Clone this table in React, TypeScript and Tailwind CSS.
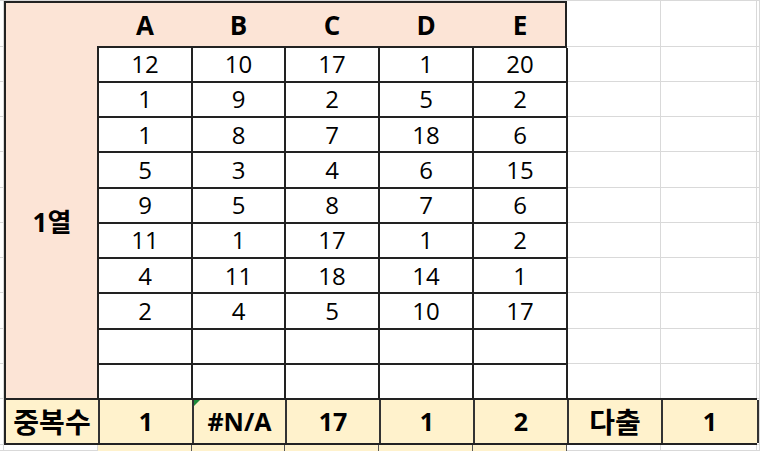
const cols = ['A', 'B', 'C', 'D', 'E'];

const rows: (number | null)[][] = [
  [12, 10, 17, 1, 20],
  [1, 9, 2, 5, 2],
  [1, 8, 7, 18, 6],
  [5, 3, 4, 6, 15],
  [9, 5, 8, 7, 6],
  [11, 1, 17, 1, 2],
  [4, 11, 18, 14, 1],
  [2, 4, 5, 10, 17],
  [null, null, null, null, null],
  [null, null, null, null, null],
];

const totals = ['1', '#N/A', '17', '1', '2'];

const font = "font-['Open_Sans','Noto_Sans_CJK_KR',sans-serif]";

// sheet tracks, shared by the gridline layer and the table layer
const tracks =
  'grid grid-cols-[4px_94px_94px_93px_94px_94px_94px_94px_96px_1fr] grid-rows-[1px_45.5px_repeat(10,35.25px)_46px_1fr]';

function Gridlines() {
  return (
    <div className={`col-start-1 row-start-1 ${tracks}`}>
      {Array.from({ length: 140 }).map((_, i) => (
        <div key={i} className="border-r border-b border-[#d9d9d9]" />
      ))}
    </div>
  );
}

export default function App() {
  return (
    <div className={`grid w-[760px] h-[451px] overflow-hidden bg-white text-black ${font}`}>
      <Gridlines />

      <div className={`col-start-1 row-start-1 ${tracks}`}>
        {/* header band */}
        <div className="col-start-2 col-span-6 row-start-2 bg-[#fce4d6] border-t-2 border-l-2 border-r-2 border-[#222]" />
        {cols.map((c, i) => (
          <div
            key={c}
            className={`row-start-2 flex items-center justify-center pt-1 text-[26px] font-bold ${
              ['col-start-3', 'col-start-4', 'col-start-5', 'col-start-6', 'col-start-7'][i]
            }`}
          >
            {c}
          </div>
        ))}

        {/* row label */}
        <div className="col-start-2 row-start-3 row-span-10 bg-[#fce4d6] border-l-2 border-[#222] flex items-center justify-center text-[26px] font-bold">
          1열
        </div>

        {/* values */}
        <div className="col-start-3 col-span-5 row-start-3 row-span-10 grid grid-cols-[94px_93px_94px_94px_94px] grid-rows-[repeat(10,35.25px)] border-l-2 border-t-2 border-[#222] -ml-[1px] -mt-[1px]">
          {rows.flatMap((r, ri) =>
            r.map((v, ci) => (
              <div
                key={`${ri}-${ci}`}
                className="bg-white border-r-2 border-b-2 border-[#222] flex items-center justify-center text-[24px]"
              >
                {v ?? ''}
              </div>
            ))
          )}
        </div>

        {/* totals row */}
        <div className="col-start-2 col-span-8 row-start-13 grid grid-cols-[94px_94px_93px_94px_94px_94px_94px_96px] bg-[#fff2cc] border-t-2 border-b-2 border-l-2 border-[#222] -mt-[1px]">
          <div className="border-r-2 border-[#333] flex items-center justify-center text-[28px] font-bold">중복수</div>
          {totals.map((t, i) => (
            <div key={i} className="relative border-r-2 border-[#333] flex items-center justify-center text-[25px] font-bold">
              {t === '#N/A' && (
                <span className="absolute top-0 left-0 w-0 h-0 border-t-[6px] border-t-[#1d8a3a] border-r-[6px] border-r-transparent" />
              )}
              {t}
            </div>
          ))}
          <div className="border-r-2 border-[#333] flex items-center justify-center text-[28px] font-bold">다출</div>
          <div className="border-r-2 border-[#333] flex items-center justify-center text-[25px] font-bold">1</div>
        </div>

        {/* next row, partly visible */}
        <div className="col-start-3 col-span-5 row-start-14 grid grid-cols-[94px_93px_94px_94px_94px] bg-[#fff2cc]">
          {cols.map((c) => (
            <div key={c} className="border-r border-[#555]" />
          ))}
        </div>
      </div>
    </div>
  );
}
